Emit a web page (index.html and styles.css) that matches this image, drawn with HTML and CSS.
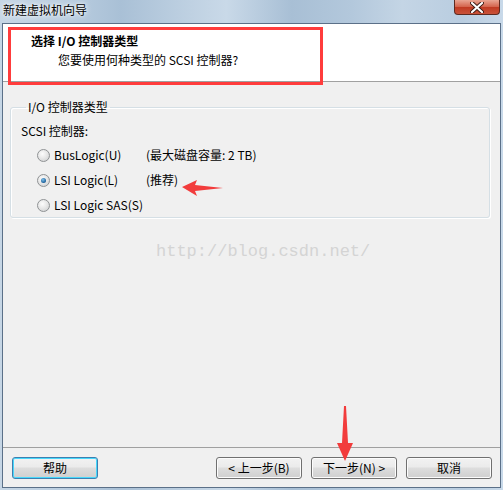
FILE: index.html
```html
<!DOCTYPE html>
<html lang="zh-CN">
<head>
    <meta charset="UTF-8">
    <title>新建虚拟机向导</title>
    <link rel="stylesheet" href="styles.css">
</head>
<body>
    <div class="window">
        <div class="titlebar">
            <span class="title">新建虚拟机向导</span>
            <div class="close-btn">
                <svg width="14" height="11" viewBox="0 0 14 11">
                    <path d="M2 1 L12 10 M12 1 L2 10" stroke="#3a1a14" stroke-width="4" stroke-linecap="round"/>
                    <path d="M2 1 L12 10 M12 1 L2 10" stroke="#ffffff" stroke-width="2.2" stroke-linecap="round"/>
                </svg>
            </div>
        </div>

        <div class="client">
            <div class="header">
                <div class="header-title">选择 I/O 控制器类型</div>
                <div class="header-sub">您要使用何种类型的 SCSI 控制器?</div>
            </div>

            <div class="content">
                <fieldset class="group">
                    <legend>I/O 控制器类型</legend>
                    <div class="group-label">SCSI 控制器:</div>
                    <div class="options">
                        <div class="option">
                            <span class="radio"></span>
                            <span class="opt-name">BusLogic(U)</span>
                            <span class="opt-note">(最大磁盘容量: 2 TB)</span>
                        </div>
                        <div class="option">
                            <span class="radio checked"></span>
                            <span class="opt-name">LSI Logic(L)</span>
                            <span class="opt-note">(推荐)</span>
                        </div>
                        <div class="option">
                            <span class="radio"></span>
                            <span class="opt-name">LSI Logic SAS(S)</span>
                        </div>
                    </div>
                </fieldset>
            </div>

            <div class="footer">
                <button class="btn btn-default">帮助</button>
                <div class="btn-group">
                    <button class="btn">&lt; 上一步(B)</button>
                    <button class="btn">下一步(N) &gt;</button>
                    <button class="btn">取消</button>
                </div>
            </div>
        </div>

        <!-- annotations drawn over the screenshot -->
        <div class="mark-box"></div>
        <svg class="arrow-left" width="44" height="20" viewBox="0 0 44 20">
            <polygon points="1,8 16,1 14,6 42,9 14,12 16,17" fill="#f23c3c"/>
        </svg>
        <svg class="arrow-down" width="22" height="58" viewBox="0 0 22 58">
            <polygon points="10,0 12,0 14,37 19,37 11,55 3,37 8,37" fill="#f23c3c"/>
        </svg>
        <div class="watermark">http://blog.csdn.net/</div>
    </div>
</body>
</html>
```

FILE: styles.css
```css
* { margin: 0; padding: 0; box-sizing: border-box; }
body {
    font-family: "Noto Sans CJK SC", "Liberation Sans", sans-serif;
    font-size: 12px;
    line-height: 16px;
    color: #000;
    background: #fff;
}
.window {
    position: relative;
    width: 503px; height: 490px;
    padding: 0 2px 2px 2px;
    display: flex; flex-direction: column;
    background: linear-gradient(90deg, #c6d6e5 0%, #bccfe1 12%, #a9c0d6 24%, #bfd1e2 38%, #c9d9e8 45%, #a8bfd5 58%, #b3c8dc 70%, #c4d5e5 80%, #b9cde0 92%, #c8d9e9 100%);
}
.titlebar {
    height: 23px;
    position: relative;
    display: flex; align-items: flex-start;
}
.title {
    margin: 2px 0 0 1px;
    color: #000;
    text-shadow: 0 0 6px #fff, 0 0 3px #fff;
}
.close-btn {
    position: absolute; top: 0; right: 1px;
    width: 46px; height: 15px;
    border: 1px solid #5e2a20; border-top: none;
    border-radius: 0 0 4px 4px;
    background: linear-gradient(#e9a593, #d3624a 50%, #c03a22 51%, #c9533a);
    display: flex; align-items: center; justify-content: center;
}
.client {
    flex: 1;
    border: 1px solid #5b7088;
    background: #f0f0f0;
    display: flex; flex-direction: column;
}
.header {
    height: 58px;
    background: #fff;
    border-bottom: 1px solid #a0a0a0;
    padding: 9px 0 0 28px;
}
.header-title { font-weight: bold; }
.header-sub { margin-top: 3px; padding-left: 27px; }
.content { flex: 1; }
.group {
    margin: 17px 10px 0 7px;
    padding: 8px 10px 4px 10px;
    border: 1px solid #d5dfe5;
    border-radius: 3px;
    box-shadow: inset 1px 1px 0 #fff, 1px 1px 0 #fff;
    min-width: 0;
}
.group legend {
    margin-left: 5px;
    padding: 0 2px;
}
.options {
    margin-top: 8px;
    padding-left: 16px;
    display: flex; flex-direction: column; gap: 9px;
}
.option { display: flex; align-items: center; height: 16px; }
.radio {
    width: 13px; height: 13px;
    border-radius: 50%;
    border: 1px solid #8f9294;
    background: radial-gradient(circle at 40% 35%, #fcfcfc 0%, #e8e8e8 45%, #c9cbcd 100%);
    margin-right: 4px;
    display: flex; align-items: center; justify-content: center;
}
.radio.checked::after {
    content: "";
    width: 5px; height: 5px; border-radius: 50%;
    background: radial-gradient(circle at 40% 35%, #7fc0ea, #1a5f9a 70%, #0f3f70);
}
.opt-name { width: 92px; }
.footer {
    height: 40px;
    border-top: 1px solid #a0a0a0;
    padding: 9px 8px 0 9px;
    display: flex; justify-content: space-between; align-items: flex-start;
}
.btn-group { display: flex; gap: 9px; }
.btn {
    width: 86px; height: 22px;
    font-family: inherit; font-size: 12px; line-height: 16px;
    color: #000;
    border: 1px solid #707070;
    border-radius: 3px;
    background: linear-gradient(#f2f2f2 0%, #ebebeb 45%, #dddddd 50%, #cfcfcf 100%);
    box-shadow: inset 0 0 0 1px #fcfcfc;
}
.btn-default {
    border-color: #3c7fb1;
    box-shadow: inset 0 0 0 1px #48d8fb;
    background: linear-gradient(#eaf6fd 0%, #d9f0fc 45%, #bee6fd 50%, #a7d9f5 100%);
    background: linear-gradient(#f2f2f2 0%, #ebebeb 45%, #dddddd 50%, #cfcfcf 100%);
}
.mark-box {
    position: absolute; left: 8px; top: 27px;
    width: 315px; height: 58px;
    border: 3px solid #ff3c3c;
}
.arrow-left { position: absolute; left: 181px; top: 179px; }
.arrow-down { position: absolute; left: 334px; top: 406px; }
.watermark {
    position: absolute; left: 156px; top: 242px;
    font-family: "Liberation Mono", monospace;
    font-size: 17px; line-height: 20px;
    color: #d4d4d4;
}
```
